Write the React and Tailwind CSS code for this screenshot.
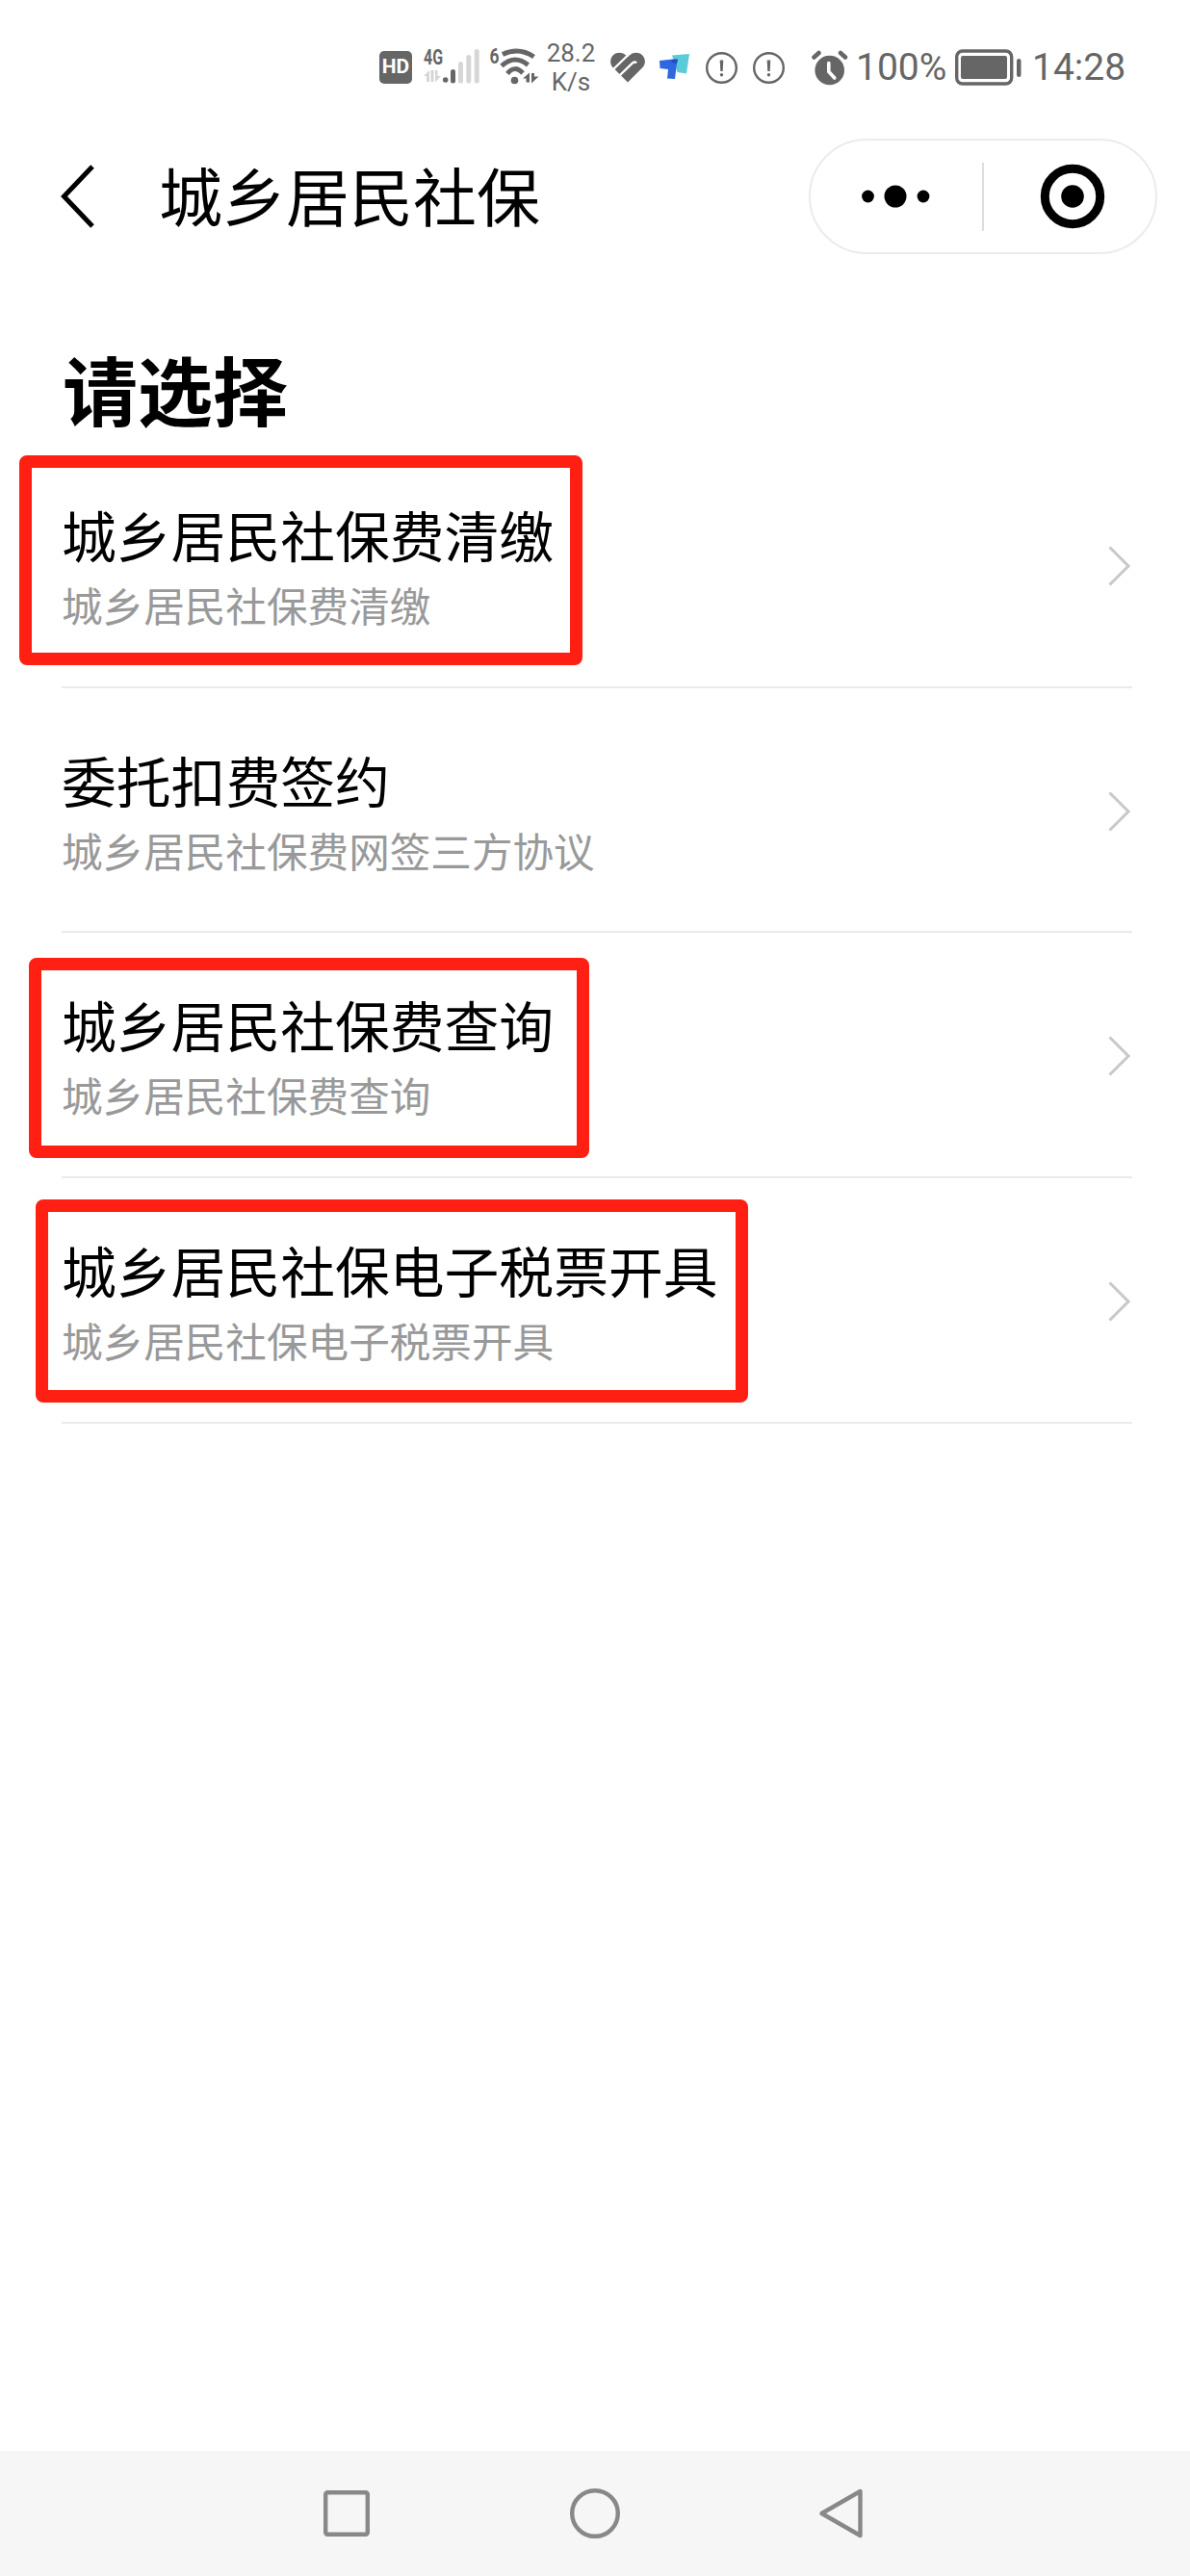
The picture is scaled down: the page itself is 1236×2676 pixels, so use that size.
const services = [
  {
    title: '城乡居民社保费清缴',
    desc: '城乡居民社保费清缴',
    mark: 'left-[20px] top-[13px] w-[585px] h-[218px]',
  },
  {
    title: '委托扣费签约',
    desc: '城乡居民社保费网签三方协议',
  },
  {
    title: '城乡居民社保费查询',
    desc: '城乡居民社保费查询',
    mark: 'left-[30px] top-[26px] w-[582px] h-[208px]',
  },
  {
    title: '城乡居民社保电子税票开具',
    desc: '城乡居民社保电子税票开具',
    mark: 'left-[37px] top-[22px] w-[740px] h-[211px]',
  },
];

const SignalIcon = () => (
  <svg className="ml-[10px] h-[60px] w-[62px]" viewBox="0 -8 62 60" fill="#666">
    <text x="2" y="18.500" fontSize="22" fontWeight="700" fontFamily="Roboto" textLength="20" lengthAdjust="spacingAndGlyphs">
      4G
    </text>
    <path d="M2 31L8 25V37H5V31zM9.500 25h3V37h-3zM14 25h2.500V31H20L14 37.500z" fill="#d6d6d6" />
    <circle cx="24.700" cy="35" r="2.800" />
    <rect x="30" y="24" width="5" height="14.500" rx="2.500" />
    <g fill="#d6d6d6">
      <rect x="38" y="16" width="5" height="22.500" rx="2.500" />
      <rect x="46.300" y="9" width="5" height="29.500" rx="2.500" />
      <rect x="54.700" y="3" width="5" height="35.500" rx="2.500" />
    </g>
  </svg>
);

const WifiIcon = () => (
  <svg className="ml-[6px] h-[60px] w-[56px]" viewBox="0 -8 56 60" fill="#666">
    <text x="2.500" y="17.500" fontSize="22" fontWeight="700" fontFamily="Roboto" textLength="10" lengthAdjust="spacingAndGlyphs">
      6
    </text>
    <g fill="none" stroke="#666" strokeWidth="5">
      <path d="M16 8.500Q33 .5 48.500 11" />
      <path d="M15 20.500Q28.500 8 42.500 19.500" />
      <path d="M21 28.500Q28.500 19 37 28" />
    </g>
    <circle cx="28.500" cy="35.500" r="3.800" />
    <path d="M37 33.500L44 27.500v10h-3.500V33.500zM46 28h3v3.500h4.500L46 38.500z" />
  </svg>
);

const HeartIcon = () => (
  <svg className="ml-[14px] h-[36px] w-[38px]" viewBox="0 0 38 36">
    <path
      d="M19 33.500L3.500 18C.3 14.500.3 8.500 4 5.200 7.500 2 13 2 16.500 5l2.500 2 2.500-2C25 2 30.500 2 34 5.200c3.800 3.500 3.800 9.300.5 12.800z"
      fill="#666"
    />
    <path d="M3.500 20.500L19.500 5M10.500 26.500L24 13.500q2.500-2 4 0" fill="none" stroke="#fff" strokeWidth="2.400" />
  </svg>
);

const NoticeIcon = () => (
  <svg className="ml-4 h-[33px] w-[33px]" viewBox="0 0 33 33" fill="#666">
    <circle cx="16.500" cy="16.500" r="15.300" fill="none" stroke="#666" strokeWidth="2.400" />
    <path d="M14.700 8.500h3.600l-.6 11.500h-2.400z" />
    <circle cx="16.500" cy="23.700" r="1.700" />
  </svg>
);

const AlarmIcon = () => (
  <svg className="ml-7 h-[37px] w-[38px]" viewBox="0 0 38 37">
    <circle cx="18.700" cy="21" r="15.300" fill="#666" />
    <path d="M2.500 7.500L7.500 3M35 7.500L30 3" stroke="#666" strokeWidth="4.500" strokeLinecap="round" />
    <path d="M17.800 13.500v9l6 6.500" fill="none" stroke="#fff" strokeWidth="3.600" strokeLinecap="round" strokeLinejoin="round" />
  </svg>
);

const StatusBar = () => (
  <div className="flex h-[140px] items-center pl-[394px] font-[Roboto,sans-serif] text-[#666]">
    <div className="flex h-[34px] w-[34px] items-center justify-center rounded-[5px] bg-[#666] text-[21px] font-bold text-white">
      HD
    </div>
    <SignalIcon />
    <WifiIcon />
    <div className="ml-[5px] flex w-[52px] flex-col text-center text-[26px] leading-[30px]">
      <span>28.2</span>
      <span>K/s</span>
    </div>
    <HeartIcon />
    <svg className="ml-[14px] h-[28px] w-[32px]" viewBox="0 0 32 28">
      <path d="M13 1.500L31 0 28 20.500 18.500 19z" fill="#5acbd8" />
      <path d="M0 7l13.500-1.500h5L16 26 8 25.500l1-9.500L.5 15z" fill="#2f68e0" />
      <path d="M13 6l6-.5-1 4.500-6-1z" fill="#1d4fc0" />
    </svg>
    <NoticeIcon />
    <NoticeIcon />
    <AlarmIcon />
    <span className="ml-[8px] w-[96px] text-[39px] leading-none">100%</span>
    <svg className="ml-[7px] h-[38px] w-[70px]" viewBox="0 0 70 38" fill="#666">
      <rect x="1.700" y="2" width="57" height="34" rx="6" fill="none" stroke="#666" strokeWidth="3.400" />
      <rect x="6" y="7" width="48" height="24" rx="2" />
      <rect x="64" y="10" width="4.500" height="19" rx="2.200" />
    </svg>
    <span className="ml-[10px] text-[39px] leading-none">14:28</span>
  </div>
);

const Header = () => (
  <header className="flex h-[128px] items-center pl-[62px]">
    <svg className="h-[66px] w-[38px]" viewBox="0 0 38 66">
      <path d="M34 2L4.500 33 34 64" fill="none" stroke="#000" strokeWidth="5" />
    </svg>
    <h1 className="ml-[65px] pb-[6px] text-[66px] leading-none whitespace-nowrap">城乡居民社保</h1>
    <div className="ml-auto mr-[34px] flex h-[120px] w-[362px] items-center rounded-full border-2 border-[#ebebeb]">
      <svg className="ml-[50px] h-[24px] w-[76px]" viewBox="0 0 76 24">
        <circle cx="9.500" cy="12" r="6.400" />
        <circle cx="38" cy="12" r="11.500" />
        <circle cx="67" cy="12" r="6.400" />
      </svg>
      <div className="ml-[52px] h-[71px] w-[2px] bg-[#ddd]" />
      <svg className="ml-[58px] h-[68px] w-[68px]" viewBox="0 0 68 68">
        <circle cx="34" cy="34" r="28.700" fill="none" stroke="#000" strokeWidth="9" />
        <circle cx="34" cy="34" r="11.800" />
      </svg>
    </div>
  </header>
);

const ServiceRow = ({ title, desc, mark }) => (
  <li className="relative h-[254.700px] px-[60px] pl-[64px]">
    <div className="flex h-full items-center justify-between border-b-2 border-[#eaeaea]">
      <div className="pt-[2px]">
        <p className="text-[56.800px] leading-[81px] whitespace-nowrap">{title}</p>
        <p className="text-[42.600px] leading-[66px] whitespace-nowrap text-[#999]">{desc}</p>
      </div>
      <svg className="mt-[3px] mr-[1px] h-[44px] w-[26px]" viewBox="0 0 26 44">
        <path d="M3.500 2.500L23 22 3.500 41.500" fill="none" stroke="#c8c8c8" strokeWidth="3" />
      </svg>
    </div>
    {mark && <div className={`absolute rounded-[8px] border-[13px] border-[#ff1f13] ${mark}`} />}
  </li>
);

const NavBar = () => (
  <nav className="flex h-[130px] items-center bg-[#f6f6f6] pl-[334px]">
    <svg className="h-[52px] w-[52px]" viewBox="0 0 52 52">
      <rect x="4.200" y="4.200" width="43.600" height="43.600" rx="2" fill="none" stroke="#888" strokeWidth="4.400" />
    </svg>
    <svg className="ml-[205px] h-[54px] w-[54px]" viewBox="0 0 54 54">
      <circle cx="27" cy="27" r="23.800" fill="none" stroke="#888" strokeWidth="4.400" />
    </svg>
    <svg className="ml-[205px] h-[54px] w-[48px]" viewBox="0 0 48 54">
      <path d="M43.500 4v46L3.500 27z" fill="none" stroke="#888" strokeWidth="4.400" strokeLinejoin="round" />
    </svg>
  </nav>
);

export default function App() {
  return (
    <div className="flex h-[2676px] w-[1236px] flex-col bg-white font-['Noto_Sans_CJK_SC',sans-serif] text-black">
      <StatusBar />
      <Header />
      <main className="flex-1">
        <h2 className="flex h-[192px] items-end pb-[18px] pl-[65px] text-[78px] leading-[78px] font-bold">
          请选择
        </h2>
        <ul>
          {services.map((item) => (
            <ServiceRow key={item.title} {...item} />
          ))}
        </ul>
      </main>
      <NavBar />
    </div>
  );
}
